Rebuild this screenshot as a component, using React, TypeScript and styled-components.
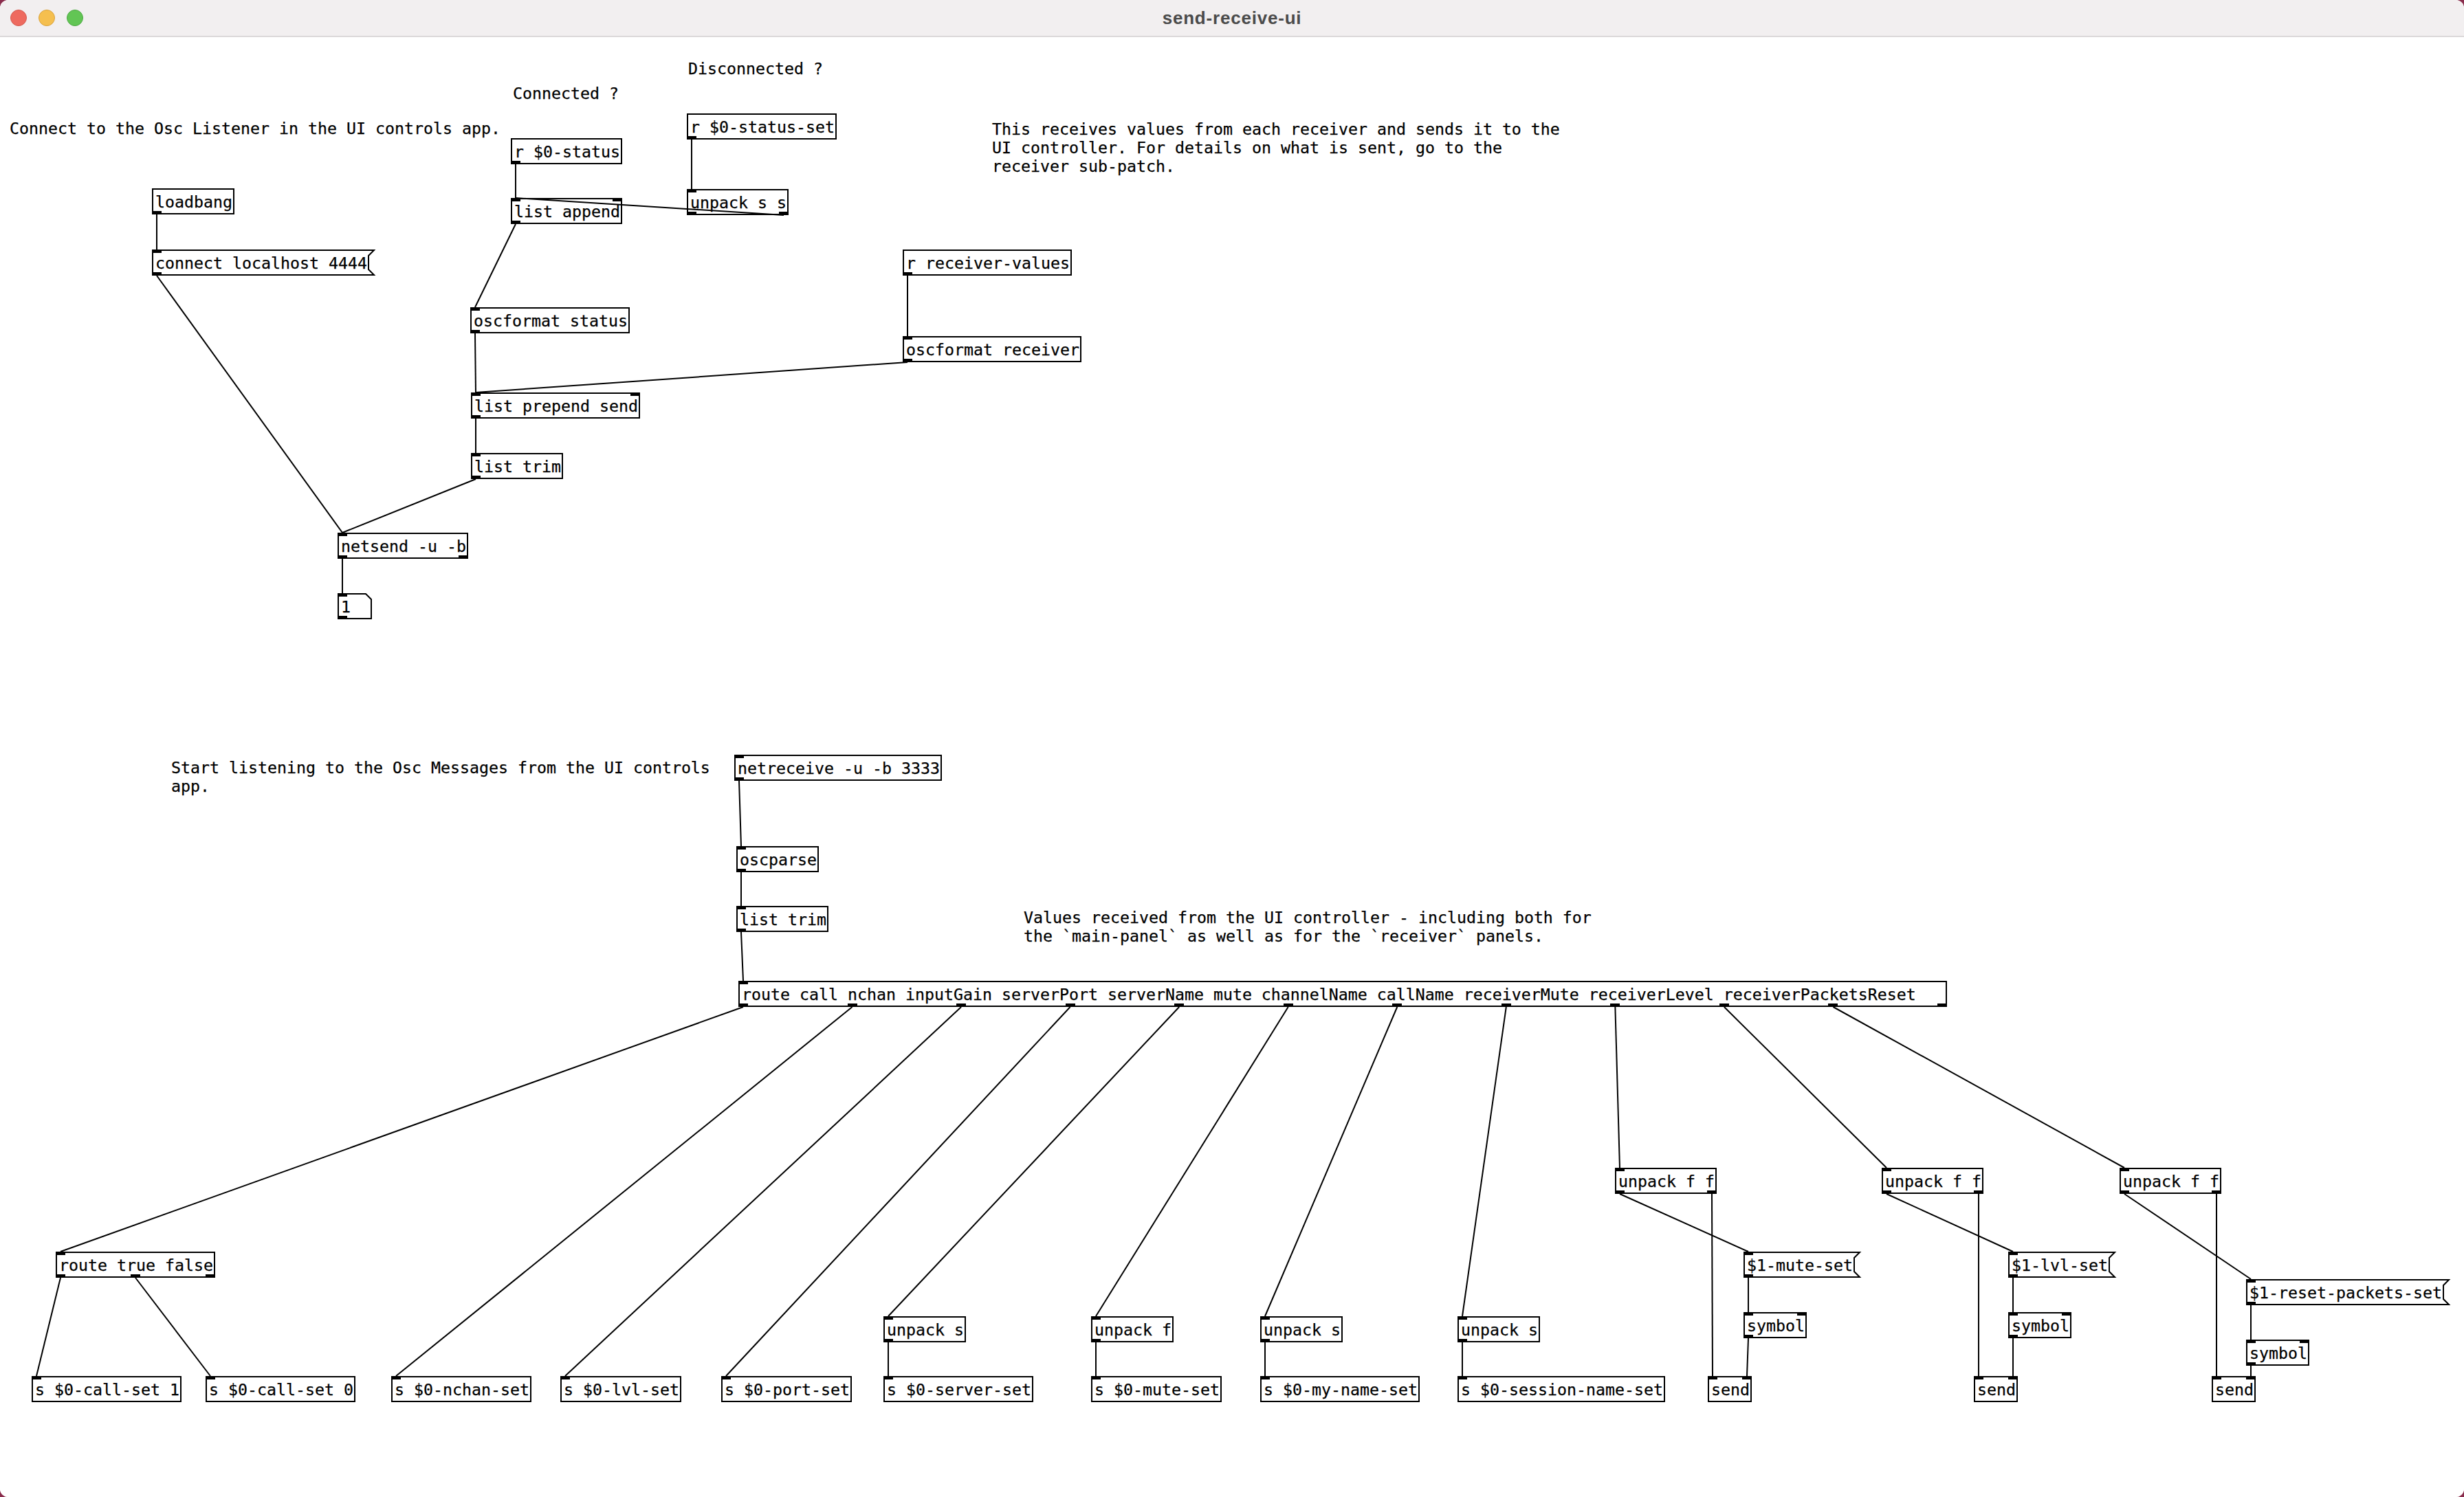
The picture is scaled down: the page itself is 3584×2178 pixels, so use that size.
import React from 'react';
import styled, { createGlobalStyle } from 'styled-components';

const TITLE_H = 54;
const BOX_H = 38;
const CHAR_W = 14;
const IO_W = 14;
const IO_MID = 7;
const FLAG = 8;

type Kind = 'obj' | 'msg' | 'atom';

interface PdNode {
  id: string;
  x: number;
  y: number;
  text: string;
  ins: number;
  outs: number;
  kind?: Kind;
  w?: number;
}

interface PdComment {
  x: number;
  y: number;
  text: string;
}

type Wire = [string, number, string, number];

const nodes: PdNode[] = [
  { id: 'loadbang', x: 221, y: 274, text: 'loadbang', ins: 0, outs: 1 },
  { id: 'connect', x: 221, y: 363, text: 'connect localhost 4444', ins: 1, outs: 1, kind: 'msg' },
  { id: 'rstatus', x: 743, y: 201, text: 'r $0-status', ins: 0, outs: 1 },
  { id: 'append', x: 743, y: 288, text: 'list append', ins: 2, outs: 1 },
  { id: 'rstatusset', x: 999, y: 165, text: 'r $0-status-set', ins: 0, outs: 1 },
  { id: 'unpackss', x: 999, y: 275, text: 'unpack s s', ins: 1, outs: 2 },
  { id: 'oscstatus', x: 684, y: 447, text: 'oscformat status', ins: 1, outs: 1 },
  { id: 'rrecv', x: 1313, y: 363, text: 'r receiver-values', ins: 0, outs: 1 },
  { id: 'oscrecv', x: 1313, y: 489, text: 'oscformat receiver', ins: 1, outs: 1 },
  { id: 'prepend', x: 685, y: 571, text: 'list prepend send', ins: 2, outs: 1 },
  { id: 'trim1', x: 685, y: 659, text: 'list trim', ins: 1, outs: 1 },
  { id: 'netsend', x: 491, y: 775, text: 'netsend -u -b', ins: 1, outs: 2 },
  { id: 'atom', x: 491, y: 863, text: '1', ins: 1, outs: 1, kind: 'atom', w: 50 },
  { id: 'netreceive', x: 1068, y: 1098, text: 'netreceive -u -b 3333', ins: 1, outs: 1 },
  { id: 'oscparse', x: 1071, y: 1231, text: 'oscparse', ins: 1, outs: 1 },
  { id: 'trim2', x: 1071, y: 1318, text: 'list trim', ins: 1, outs: 1 },
  {
    id: 'route',
    x: 1074,
    y: 1427,
    text: 'route call nchan inputGain serverPort serverName mute channelName callName receiverMute receiverLevel receiverPacketsReset',
    ins: 1,
    outs: 12,
    w: 1758,
  },
  { id: 'routetf', x: 81, y: 1821, text: 'route true false', ins: 1, outs: 3 },
  { id: 'call1', x: 46, y: 2002, text: 's $0-call-set 1', ins: 1, outs: 0 },
  { id: 'call0', x: 299, y: 2002, text: 's $0-call-set 0', ins: 1, outs: 0 },
  { id: 'nchan', x: 569, y: 2002, text: 's $0-nchan-set', ins: 1, outs: 0 },
  { id: 'lvl', x: 815, y: 2002, text: 's $0-lvl-set', ins: 1, outs: 0 },
  { id: 'port', x: 1049, y: 2002, text: 's $0-port-set', ins: 1, outs: 0 },
  { id: 'ups1', x: 1285, y: 1915, text: 'unpack s', ins: 1, outs: 1 },
  { id: 'server', x: 1285, y: 2002, text: 's $0-server-set', ins: 1, outs: 0 },
  { id: 'upf1', x: 1587, y: 1915, text: 'unpack f', ins: 1, outs: 1 },
  { id: 'mute', x: 1587, y: 2002, text: 's $0-mute-set', ins: 1, outs: 0 },
  { id: 'ups2', x: 1833, y: 1915, text: 'unpack s', ins: 1, outs: 1 },
  { id: 'myname', x: 1833, y: 2002, text: 's $0-my-name-set', ins: 1, outs: 0 },
  { id: 'ups3', x: 2120, y: 1915, text: 'unpack s', ins: 1, outs: 1 },
  { id: 'session', x: 2120, y: 2002, text: 's $0-session-name-set', ins: 1, outs: 0 },
  { id: 'uff1', x: 2349, y: 1699, text: 'unpack f f', ins: 1, outs: 2 },
  { id: 'msg1', x: 2536, y: 1821, text: '$1-mute-set', ins: 1, outs: 1, kind: 'msg' },
  { id: 'sym1', x: 2536, y: 1909, text: 'symbol', ins: 2, outs: 1 },
  { id: 'send1', x: 2484, y: 2002, text: 'send', ins: 2, outs: 0 },
  { id: 'uff2', x: 2737, y: 1699, text: 'unpack f f', ins: 1, outs: 2 },
  { id: 'msg2', x: 2921, y: 1821, text: '$1-lvl-set', ins: 1, outs: 1, kind: 'msg' },
  { id: 'sym2', x: 2921, y: 1909, text: 'symbol', ins: 2, outs: 1 },
  { id: 'send2', x: 2871, y: 2002, text: 'send', ins: 2, outs: 0 },
  { id: 'uff3', x: 3083, y: 1699, text: 'unpack f f', ins: 1, outs: 2 },
  { id: 'msg3', x: 3267, y: 1861, text: '$1-reset-packets-set', ins: 1, outs: 1, kind: 'msg' },
  { id: 'sym3', x: 3267, y: 1949, text: 'symbol', ins: 2, outs: 1 },
  { id: 'send3', x: 3217, y: 2002, text: 'send', ins: 2, outs: 0 },
];

const wires: Wire[] = [
  ['loadbang', 0, 'connect', 0],
  ['connect', 0, 'netsend', 0],
  ['rstatus', 0, 'append', 0],
  ['unpackss', 1, 'append', 0],
  ['rstatusset', 0, 'unpackss', 0],
  ['append', 0, 'oscstatus', 0],
  ['oscstatus', 0, 'prepend', 0],
  ['rrecv', 0, 'oscrecv', 0],
  ['oscrecv', 0, 'prepend', 0],
  ['prepend', 0, 'trim1', 0],
  ['trim1', 0, 'netsend', 0],
  ['netsend', 0, 'atom', 0],
  ['netreceive', 0, 'oscparse', 0],
  ['oscparse', 0, 'trim2', 0],
  ['trim2', 0, 'route', 0],
  ['route', 0, 'routetf', 0],
  ['routetf', 0, 'call1', 0],
  ['routetf', 1, 'call0', 0],
  ['route', 1, 'nchan', 0],
  ['route', 2, 'lvl', 0],
  ['route', 3, 'port', 0],
  ['route', 4, 'ups1', 0],
  ['route', 5, 'upf1', 0],
  ['route', 6, 'ups2', 0],
  ['route', 7, 'ups3', 0],
  ['route', 8, 'uff1', 0],
  ['route', 9, 'uff2', 0],
  ['route', 10, 'uff3', 0],
  ['ups1', 0, 'server', 0],
  ['upf1', 0, 'mute', 0],
  ['ups2', 0, 'myname', 0],
  ['ups3', 0, 'session', 0],
  ['uff1', 0, 'msg1', 0],
  ['uff1', 1, 'send1', 0],
  ['msg1', 0, 'sym1', 0],
  ['sym1', 0, 'send1', 1],
  ['uff2', 0, 'msg2', 0],
  ['uff2', 1, 'send2', 0],
  ['msg2', 0, 'sym2', 0],
  ['sym2', 0, 'send2', 1],
  ['uff3', 0, 'msg3', 0],
  ['uff3', 1, 'send3', 0],
  ['msg3', 0, 'sym3', 0],
  ['sym3', 0, 'send3', 1],
];

const comments: PdComment[] = [
  { x: 1001, y: 86, text: 'Disconnected ?' },
  { x: 746, y: 122, text: 'Connected ?' },
  { x: 14, y: 173, text: 'Connect to the Osc Listener in the UI controls app.' },
  {
    x: 1443,
    y: 174,
    text: 'This receives values from each receiver and sends it to the\nUI controller. For details on what is sent, go to the\nreceiver sub-patch.',
  },
  { x: 249, y: 1103, text: 'Start listening to the Osc Messages from the UI controls\napp.' },
  {
    x: 1489,
    y: 1321,
    text: 'Values received from the UI controller - including both for\nthe `main-panel` as well as for the `receiver` panels.',
  },
];

const widthOf = (n: PdNode): number => {
  if (n.w) return n.w;
  const base = n.text.length * CHAR_W + 8;
  return n.kind === 'msg' ? base + 8 : base;
};

const ioX = (n: PdNode, idx: number, count: number): number => {
  const w = widthOf(n);
  const off = count > 1 ? (idx * (w - IO_W)) / (count - 1) : 0;
  return n.x + off + IO_MID;
};

const GlobalStyle = createGlobalStyle`
  html, body {
    margin: 0;
    padding: 0;
    background: #8a2c4c;
  }
  #root {
    width: 3584px;
    height: 2178px;
  }
`;

const Window = styled.div`
  width: 3584px;
  height: 2178px;
  display: flex;
  flex-direction: column;
  background: #ffffff;
  border-radius: 12px;
  overflow: hidden;
`;

const TitleBar = styled.header`
  flex: none;
  height: ${TITLE_H}px;
  box-sizing: border-box;
  display: grid;
  grid-template-columns: 1fr auto 1fr;
  align-items: center;
  background: #f2eff0;
  border-bottom: 2px solid #dbd8d9;
`;

const Lights = styled.div`
  display: flex;
  align-items: center;
  gap: 17px;
  padding-left: 15px;
`;

const Light = styled.span<{ $fill: string; $edge: string }>`
  width: 24px;
  height: 24px;
  box-sizing: border-box;
  border-radius: 50%;
  background: ${(p) => p.$fill};
  border: 1px solid ${(p) => p.$edge};
`;

const Title = styled.div`
  font-family: 'Liberation Sans', Arial, sans-serif;
  font-weight: 700;
  font-size: 26px;
  letter-spacing: 0.8px;
  color: #4b4b4b;
  padding-top: 1px;
`;

const Canvas = styled.main`
  position: relative;
  flex: 1;
  background: #ffffff;
  font-family: 'DejaVu Sans Mono', monospace;
  font-size: 23.25px;
  line-height: 27px;
  color: #000;
  -webkit-text-stroke: 0.25px #000;
`;

const WireLayer = styled.svg`
  position: absolute;
  left: 0;
  top: 0;
  pointer-events: none;
`;

const Box = styled.div.attrs<{ $x: number; $y: number; $w: number }>((p) => ({
  style: { left: p.$x, top: p.$y - TITLE_H, width: p.$w },
}))<{ $x: number; $y: number; $w: number; $kind: Kind }>`
  position: absolute;
  height: ${BOX_H}px;
  box-sizing: border-box;
  padding: 6px 0 0 5px;
  white-space: pre;
  box-shadow: ${(p) => (p.$kind === 'obj' ? 'inset 0 0 0 2px #000' : 'none')};
`;

const Outline = styled.svg`
  position: absolute;
  left: 0;
  top: 0;
  overflow: visible;
`;

const IoRow = styled.div<{ $edge: 'top' | 'bottom' }>`
  position: absolute;
  left: 0;
  right: 0;
  ${(p) => p.$edge}: 0;
  height: 5px;
  display: flex;
  justify-content: space-between;
`;

const Io = styled.span`
  width: ${IO_W}px;
  height: 100%;
  background: #000;
`;

const Comment = styled.div.attrs<{ $x: number; $y: number }>((p) => ({
  style: { left: p.$x, top: p.$y - TITLE_H },
}))<{ $x: number; $y: number }>`
  position: absolute;
  white-space: pre;
`;

const shapePoints = (kind: Kind, w: number, h: number): string => {
  const a = 1;
  const r = w - 1;
  const b = h - 1;
  if (kind === 'msg') {
    return `${a},${a} ${r},${a} ${r - FLAG},${a + FLAG} ${r - FLAG},${b - FLAG} ${r},${b} ${a},${b}`;
  }
  return `${a},${a} ${r - FLAG},${a} ${r},${a + FLAG} ${r},${b} ${a},${b}`;
};

const Node: React.FC<{ n: PdNode }> = ({ n }) => {
  const kind = n.kind ?? 'obj';
  const w = widthOf(n);
  return (
    <Box $x={n.x} $y={n.y} $w={w} $kind={kind}>
      {kind !== 'obj' && (
        <Outline width={w} height={BOX_H}>
          <polygon points={shapePoints(kind, w, BOX_H)} fill="none" stroke="#000" strokeWidth={2} />
        </Outline>
      )}
      {n.text}
      {n.ins > 0 && (
        <IoRow $edge="top">
          {Array.from({ length: n.ins }, (_, i) => (
            <Io key={i} />
          ))}
        </IoRow>
      )}
      {n.outs > 0 && (
        <IoRow $edge="bottom">
          {Array.from({ length: n.outs }, (_, i) => (
            <Io key={i} />
          ))}
        </IoRow>
      )}
    </Box>
  );
};

const App: React.FC = () => {
  const byId = new Map(nodes.map((n) => [n.id, n]));
  const canvasH = 2178 - TITLE_H;
  return (
    <>
      <GlobalStyle />
      <Window>
        <TitleBar>
          <Lights>
            <Light $fill="#ee6a5f" $edge="#d4594e" />
            <Light $fill="#f5bf4f" $edge="#d9a23d" />
            <Light $fill="#62c554" $edge="#4ea844" />
          </Lights>
          <Title>send-receive-ui</Title>
          <span />
        </TitleBar>
        <Canvas>
          <WireLayer width={3584} height={canvasH} viewBox={`0 0 3584 ${canvasH}`}>
            {wires.map(([from, o, to, i], k) => {
              const a = byId.get(from)!;
              const b = byId.get(to)!;
              const x1 = ioX(a, o, a.outs);
              const y1 = a.y + BOX_H - TITLE_H;
              const x2 = ioX(b, i, b.ins);
              const y2 = b.y - TITLE_H;
              return <line key={k} x1={x1} y1={y1} x2={x2} y2={y2} stroke="#000" strokeWidth={2} />;
            })}
          </WireLayer>
          {comments.map((c, k) => (
            <Comment key={k} $x={c.x} $y={c.y}>
              {c.text}
            </Comment>
          ))}
          {nodes.map((n) => (
            <Node key={n.id} n={n} />
          ))}
        </Canvas>
      </Window>
    </>
  );
};

export default App;
